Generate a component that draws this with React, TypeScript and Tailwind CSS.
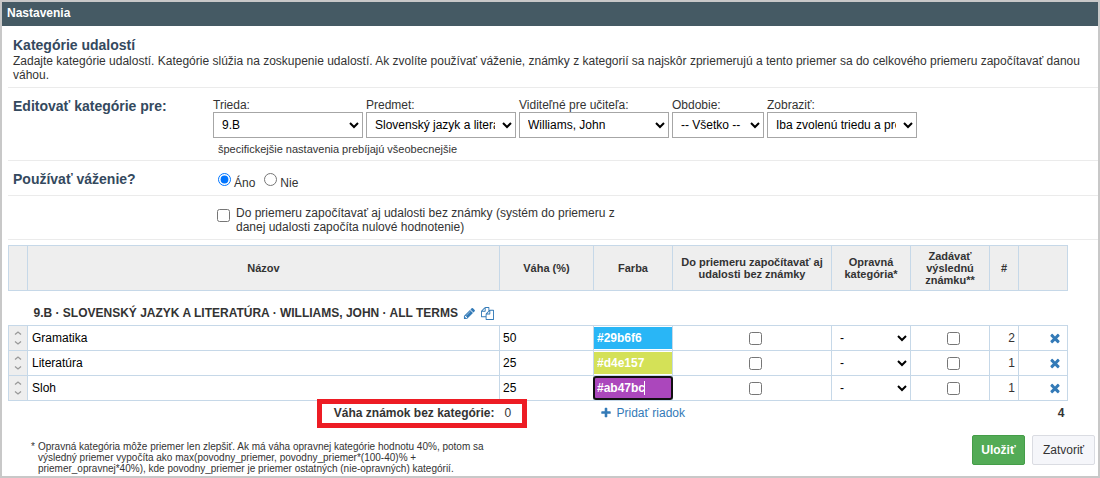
import { useState } from 'react';
import type { ReactNode } from 'react';

interface Category {
  name: string;
  weight: string;
  color: string;
  count: number;
}

const CATEGORIES: Category[] = [
  { name: 'Gramatika', weight: '50', color: '#29b6f6', count: 2 },
  { name: 'Literatúra', weight: '25', color: '#d4e157', count: 1 },
  { name: 'Sloh', weight: '25', color: '#ab47bc', count: 1 },
];

const FILTERS = [
  { id: 'trieda', label: 'Trieda:', value: '9.B', width: 'w-[150px]' },
  { id: 'predmet', label: 'Predmet:', value: 'Slovenský jazyk a literatúra', width: 'w-[150px]' },
  { id: 'ucitel', label: 'Viditeľné pre učiteľa:', value: 'Williams, John', width: 'w-[150px]' },
  { id: 'obdobie', label: 'Obdobie:', value: '-- Všetko --', width: 'w-[92px]' },
  { id: 'zobrazit', label: 'Zobraziť:', value: 'Iba zvolenú triedu a predmet', width: 'w-[150px]' },
];

const ICONS = {
  pencil:
    'M491 1536l91-91-235-235-91 91v107h128v128h107zm523-928q0-22-22-22-10 0-17 7l-542 542q-7 7-7 17 0 22 22 22 10 0 17-7l542-542q7-7 7-17zm-54-192l416 416-832 832h-416v-416zm683 96q0 53-37 90l-166 166-416-416 166-165q36-38 90-38 53 0 91 38l235 234q37 39 37 91z',
  copy:
    'M1696 384q40 0 68 28t28 68v1216q0 40-28 68t-68 28h-960q-40 0-68-28t-28-68v-288h-544q-40 0-68-28t-28-68v-672q0-40 20-88t48-76l408-408q28-28 76-48t88-20h416q40 0 68 28t28 68v328q68-40 128-40h416zm-544 213l-299 299h299v-299zm-640-384l-299 299h299v-299zm196 647l316-316v-416h-384v416q0 40-28 68t-68 28h-416v640h512v-256q0-40 20-88t48-76zm956 804v-1152h-384v416q0 40-28 68t-68 28h-416v640h896z',
  times:
    'M1490 1322q0 40-28 68l-136 136q-28 28-68 28t-68-28l-294-294-294 294q-28 28-68 28t-68-28l-136-136q-28-28-28-68t28-68l294-294-294-294q-28-28-28-68t28-68l136-136q28-28 68-28t68 28l294 294 294-294q28-28 68-28t68 28l136 136q28 28 28 68t-28 68l-294 294 294 294q28 28 28 68z',
  plus:
    'M1600 736v192q0 40-28 68t-68 28h-416v416q0 40-28 68t-68 28h-192q-40 0-68-28t-28-68v-416h-416q-40 0-68-28t-28-68v-192q0-40 28-68t68-28h416v-416q0-40 28-68t68-28h192q40 0 68 28t28 68v416h416q40 0 68 28t28 68z',
};

function Icon({ name, className }: { name: keyof typeof ICONS; className: string }) {
  return (
    <svg viewBox="0 0 1792 1792" fill="currentColor" className={className} aria-hidden="true">
      <path d={ICONS[name]} />
    </svg>
  );
}

function FormRow({ title, children }: { title?: string; children: ReactNode }) {
  return (
    <div className="flex border-b border-[#ebebeb] ml-1.5 pl-[5px]">
      <div className="w-[200px] shrink-0 pt-2.5">
        {title && <h2 className="text-sm leading-4 font-bold text-[#34495e]">{title}</h2>}
      </div>
      <div className="min-w-0 flex-1">{children}</div>
    </div>
  );
}

export default function App() {
  const [weighted, setWeighted] = useState(true);
  const [rows, setRows] = useState(CATEGORIES);

  const update = (index: number, patch: Partial<Category>) =>
    setRows(rows.map((row, i) => (i === index ? { ...row, ...patch } : row)));

  const addRow = () => setRows([...rows, { name: '', weight: '', color: '#29b6f6', count: 0 }]);
  const total = rows.reduce((sum, row) => sum + row.count, 0);

  return (
    <div className="bg-[#c8c8c8] p-0.5 font-['Liberation_Sans',Arial,sans-serif] text-xs text-[#333]">
      <div className="bg-white">
        <header className="h-6 bg-[#455a64] pl-[5px]">
          <h1 className="text-xs leading-[22px] font-bold text-white">Nastavenia</h1>
        </header>

        <section className="ml-1.5 border-b border-[#ebebeb] pt-[11px] pb-[5px] pl-[5px]">
          <h2 className="text-sm leading-4 font-bold text-[#34495e]">Kategórie udalostí</h2>
          <p className="pt-px pr-3 leading-[14px]">
            Zadajte kategórie udalostí. Kategórie slúžia na zoskupenie udalostí. Ak zvolíte používať váženie, známky z
            kategorií sa najskôr zpriemerujú a tento priemer sa do celkového priemeru započítavať danou váhou.
          </p>
        </section>

        <FormRow title="Editovať kategórie pre:">
          <div className="flex flex-wrap gap-[3px] pt-2.5">
            {FILTERS.map((filter) => (
              <div key={filter.id}>
                <label htmlFor={filter.id} className="block h-3.5 leading-[14px] whitespace-nowrap">
                  {filter.label}
                </label>
                <select
                  id={filter.id}
                  className={`block h-[26px] border border-[#a6a6a6] bg-white pr-1 pl-1 text-black ${filter.width}`}
                >
                  <option>{filter.value}</option>
                </select>
              </div>
            ))}
          </div>
          <p className="pt-1 pb-1 pl-[5px] text-[11px] leading-[14px]">špecifickejšie nastavenia prebíjajú všeobecnejšie</p>
        </FormRow>

        <FormRow title="Používať váženie?">
          <div className="flex h-[34px] items-center pt-1.5 pl-[5px]">
            <input
              id="weight-yes"
              type="radio"
              name="weighted"
              className="mb-1 size-[13px]"
              checked={weighted}
              onChange={() => setWeighted(true)}
            />
            <label htmlFor="weight-yes" className="mt-1 mr-[9px] ml-[3px]">Áno</label>
            <input
              id="weight-no"
              type="radio"
              name="weighted"
              className="mb-1 size-[13px]"
              checked={!weighted}
              onChange={() => setWeighted(false)}
            />
            <label htmlFor="weight-no" className="mt-1 ml-[3px]">Nie</label>
          </div>
        </FormRow>

        <FormRow>
          <div className="flex pt-2.5 pb-[3px] pl-1">
            <input id="include-all" type="checkbox" className="mt-[3px] size-[13px] shrink-0" />
            <label htmlFor="include-all" className="ml-1.5 w-[390px] pb-0.5 leading-[14px]">
              Do priemeru započítavať aj udalosti bez známky (systém do priemeru z danej udalosti započíta nulové
              hodnotenie)
            </label>
          </div>
        </FormRow>

        <div className="pt-[5px] pr-[30px] pl-1.5">
          <table className="w-full table-fixed border-collapse">
            <colgroup>
              <col className="w-[19px]" />
              <col />
              <col className="w-[94px]" />
              <col className="w-[79px]" />
              <col className="w-[159px]" />
              <col className="w-[79px]" />
              <col className="w-[79px]" />
              <col className="w-[29px]" />
              <col className="w-[49px]" />
            </colgroup>
            <thead>
              <tr className="h-[45px] text-[11px] leading-3 [&>th]:border [&>th]:border-[#c6d8e8] [&>th]:bg-[#eee] [&>th]:p-0">
                <th />
                <th>Názov</th>
                <th>Váha (%)</th>
                <th>Farba</th>
                <th>
                  Do priemeru započítavať aj
                  <br />
                  udalosti bez známky
                </th>
                <th>
                  Opravná
                  <br />
                  kategória*
                </th>
                <th>
                  Zadávať
                  <br />
                  výslednú
                  <br />
                  známku**
                </th>
                <th>#</th>
                <th />
              </tr>
            </thead>
            <tbody>
              <tr className="h-[35px]">
                <td colSpan={9} className="p-0 pt-2.5 pl-[25px]">
                  <div className="flex items-center">
                    <span className="font-bold">9.B · SLOVENSKÝ JAZYK A LITERATÚRA · WILLIAMS, JOHN · ALL TERMS</span>
                    <button type="button" aria-label="Upraviť" className="ml-[5px] text-[#337ab7]">
                      <Icon name="pencil" className="size-[13px]" />
                    </button>
                    <button type="button" aria-label="Kopírovať" className="ml-[5px] text-[#337ab7]">
                      <Icon name="copy" className="size-[13px]" />
                    </button>
                  </div>
                </td>
              </tr>
              {rows.map((row, i) => (
                <tr key={i} className="h-[25px] [&>td]:border [&>td]:border-[#c6d8e8] [&>td]:p-0">
                  <td className="bg-[#eee]">
                    <svg viewBox="0 0 18 24" className="block h-6 w-[18px]" fill="none" stroke="#999" strokeWidth="1.3">
                      <path d="M6 8.5l3-2.5 3 2.5M6 15.5l3 2.5 3-2.5" />
                    </svg>
                  </td>
                  <td>
                    <input
                      aria-label="Názov"
                      className="block h-6 w-full pl-1 text-black outline-none"
                      value={row.name}
                      onChange={(e) => update(i, { name: e.target.value })}
                    />
                  </td>
                  <td>
                    <input
                      aria-label="Váha"
                      className="block h-6 w-full pl-[3px] text-black outline-none"
                      value={row.weight}
                      onChange={(e) => update(i, { weight: e.target.value })}
                    />
                  </td>
                  <td>
                    <div className="relative">
                      <input
                        aria-label="Farba"
                        autoFocus={i === 2}
                        maxLength={7}
                        className="peer block h-[22px] w-full pl-[3px] font-bold text-white caret-transparent focus:rounded-[2px] focus:outline-2 focus:-outline-offset-1 focus:outline-[#101010]"
                        style={{ backgroundColor: row.color }}
                        value={row.color}
                        onChange={(e) => update(i, { color: e.target.value })}
                      />
                      {/* white caret at the end of the hex value */}
                      <span className="pointer-events-none absolute top-1 left-[50px] hidden h-3.5 w-px bg-white peer-focus:block" />
                    </div>
                  </td>
                  <td>
                    <input type="checkbox" aria-label="Započítavať bez známky" className="ml-[76px] block size-[13px]" />
                  </td>
                  <td>
                    <select aria-label="Opravná kategória" className="block h-6 w-full pl-1 text-black">
                      <option>-</option>
                    </select>
                  </td>
                  <td>
                    <input type="checkbox" aria-label="Zadávať výslednú známku" className="ml-9 block size-[13px]" />
                  </td>
                  <td className="text-right">
                    <span className="pr-[3px]">{row.count}</span>
                  </td>
                  <td>
                    <button
                      type="button"
                      aria-label="Odstrániť"
                      className="mr-[5px] ml-auto block text-[#337ab7]"
                      onClick={() => setRows(rows.filter((_, n) => n !== i))}
                    >
                      <Icon name="times" className="size-3.5" />
                    </button>
                  </td>
                </tr>
              ))}
            </tbody>
            <tfoot>
              <tr className="h-6 [&>td]:p-0">
                <td />
                <td className="text-right font-bold">
                  <div className="relative pr-[5px]">
                    Váha známok bez kategórie:
                    <div className="pointer-events-none absolute -top-[6px] -right-[27px] h-[29px] w-[210px] border-5 border-[#ed1c24]" />
                  </div>
                </td>
                <td>
                  <span className="pl-[5px]">0</span>
                </td>
                <td colSpan={2}>
                  <button type="button" onClick={addRow} className="ml-1.5 flex items-center gap-[5px] text-[#337ab7]">
                    <Icon name="plus" className="size-3" />
                    Pridať riadok
                  </button>
                </td>
                <td colSpan={3} />
                <td className="text-right font-bold">
                  <span className="pr-[3px]">{total}</span>
                </td>
              </tr>
            </tfoot>
          </table>
        </div>

        <footer className="flex items-start justify-between pr-[3px] pb-0.5 pl-[29px]">
          <div className="flex gap-[3px] pt-4 text-[10px] leading-[11px]">
            <span>*</span>
            <p className="w-[460px]">
              Opravná kategória môže priemer len zlepšiť. Ak má váha opravnej kategórie hodnotu 40%, potom sa
              <br />
              výsledný priemer vypočíta ako max(povodny_priemer, povodny_priemer*(100-40)% +
              <br />
              priemer_opravnej*40%), kde povodny_priemer je priemer ostatných (nie-opravných) kategórií.
            </p>
          </div>
          <div className="flex gap-[7px] pt-2.5">
            <button
              type="button"
              className="h-[30px] w-[53px] rounded-[2px] border border-[#449d48] bg-[#53ab56] font-bold text-white"
            >
              Uložiť
            </button>
            <button type="button" className="h-[30px] w-[63px] rounded-[2px] border border-[#dadce2] bg-[#f5f6fa]">
              Zatvoriť
            </button>
          </div>
        </footer>
      </div>
    </div>
  );
}
